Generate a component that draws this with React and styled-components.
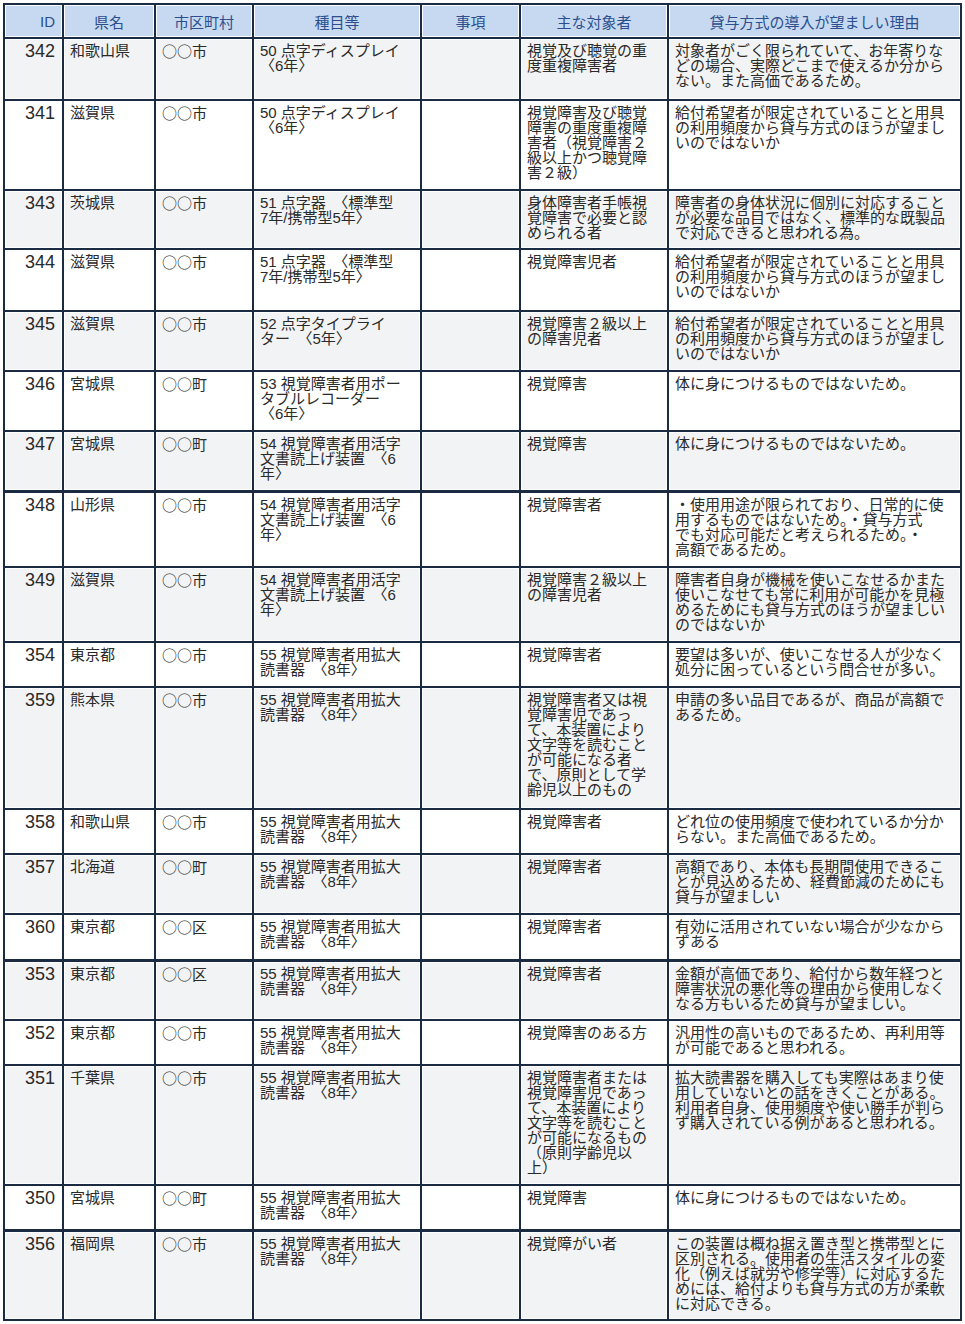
import React from 'react';
import styled, { createGlobalStyle } from 'styled-components';

const GlobalStyle = createGlobalStyle`
  body {
    margin: 0;
    background: #ffffff;
  }
`;

const COLS = '57px 90px 96px 166px 97px 146px 291px';

const Table = styled.div`
  display: flex;
  flex-direction: column;
  gap: 2px;
  width: fit-content;
  margin: 3px 0 0 3px;
  padding: 2px;
  background: #1c2b44;
  font-family: "Liberation Sans", "Noto Sans CJK JP", sans-serif;
`;

const Row = styled.div`
  display: grid;
  grid-template-columns: ${COLS};
  column-gap: 2px;
  height: ${p => p.$h}px;
  margin-top: ${p => (p.$thick ? 1 : 0)}px;
`;

const HeadCell = styled.div`
  display: flex;
  align-items: center;
  justify-content: ${p => (p.$right ? 'flex-end' : 'center')};
  padding: 0 7px;
  background: #c6d9f1;
  box-shadow: inset 0 0 0 1px #ffffff;
  color: #2b4f8e;
  font-size: 15px;
`;

const Cell = styled.div`
  padding: 4px 6px 0;
  background: ${p => (p.$alt ? '#f2f3f4' : '#ffffff')};
  box-shadow: inset 0 0 0 1px #ffffff;
  color: #2a2a2a;
  font-size: 15px;
  line-height: 15px;
  white-space: pre;
  overflow: hidden;
`;

// circles (○) must come from the CJK face, Liberation's is tiny
const CityCell = styled(Cell)`
  font-family: "Noto Sans CJK JP", sans-serif;
`;

const IdCell = styled(Cell)`
  padding-right: 7px;
  text-align: right;
  font-size: 18px;
  line-height: 17px;
`;

const HEADERS = ['県名', '市区町村', '種目等', '事項', '主な対象者', '貸与方式の導入が望ましい理由'];

const ITEM50 = '50 点字ディスプレイ\n〈6年〉';
const ITEM51 = '51 点字器　〈標準型\n7年/携帯型5年〉';
const ITEM54 = '54 視覚障害者用活字\n文書読上げ装置　〈6\n年〉';
const ITEM55 = '55 視覚障害者用拡大\n読書器　〈8年〉';
const KYUFU = '給付希望者が限定されていることと用具\nの利用頻度から貸与方式のほうが望まし\nいのではないか';
const KARADA = '体に身につけるものではないため。';

const rows = [
  { id: 342, h: 60, pref: '和歌山県', city: '○○市', item: ITEM50, target: '視覚及び聴覚の重\n度重複障害者', reason: '対象者がごく限られていて、お年寄りな\nどの場合、実際どこまで使えるか分から\nない。また高価であるため。' },
  { id: 341, h: 88, pref: '滋賀県', city: '○○市', item: ITEM50, target: '視覚障害及び聴覚\n障害の重度重複障\n害者（視覚障害２\n級以上かつ聴覚障\n害２級）', reason: KYUFU },
  { id: 343, h: 57, pref: '茨城県', city: '○○市', item: ITEM51, target: '身体障害者手帳視\n覚障害で必要と認\nめられる者', reason: '障害者の身体状況に個別に対応すること\nが必要な品目ではなく、標準的な既製品\nで対応できると思われる為。' },
  { id: 344, h: 60, pref: '滋賀県', city: '○○市', item: ITEM51, target: '視覚障害児者', reason: KYUFU },
  { id: 345, h: 58, pref: '滋賀県', city: '○○市', item: '52 点字タイプライ\nター　〈5年〉', target: '視覚障害２級以上\nの障害児者', reason: KYUFU },
  { id: 346, h: 58, pref: '宮城県', city: '○○町', item: '53 視覚障害者用ポー\nタブルレコーダー\n〈6年〉', target: '視覚障害', reason: KARADA },
  { id: 347, h: 58, pref: '宮城県', city: '○○町', item: ITEM54, target: '視覚障害', reason: KARADA },
  { id: 348, h: 73, thick: true, pref: '山形県', city: '○○市', item: ITEM54, target: '視覚障害者', reason: '・使用用途が限られており、日常的に使\n用するものではないため。・貸与方式\nでも対応可能だと考えられるため。・\n高額であるため。' },
  { id: 349, h: 73, pref: '滋賀県', city: '○○市', item: ITEM54, target: '視覚障害２級以上\nの障害児者', reason: '障害者自身が機械を使いこなせるかまた\n使いこなせても常に利用が可能かを見極\nめるためにも貸与方式のほうが望ましい\nのではないか' },
  { id: 354, h: 43, pref: '東京都', city: '○○市', item: ITEM55, target: '視覚障害者', reason: '要望は多いが、使いこなせる人が少なく\n処分に困っているという問合せが多い。' },
  { id: 359, h: 120, pref: '熊本県', city: '○○市', item: ITEM55, target: '視覚障害者又は視\n覚障害児であっ\nて、本装置により\n文字等を読むこと\nが可能になる者\nで、原則として学\n齢児以上のもの', reason: '申請の多い品目であるが、商品が高額で\nあるため。' },
  { id: 358, h: 43, pref: '和歌山県', city: '○○市', item: ITEM55, target: '視覚障害者', reason: 'どれ位の使用頻度で使われているか分か\nらない。また高価であるため。' },
  { id: 357, h: 58, pref: '北海道', city: '○○町', item: ITEM55, target: '視覚障害者', reason: '高額であり、本体も長期間使用できるこ\nとが見込めるため、経費節減のためにも\n貸与が望ましい' },
  { id: 360, h: 44, pref: '東京都', city: '○○区', item: ITEM55, target: '視覚障害者', reason: '有効に活用されていない場合が少なから\nずある' },
  { id: 353, h: 57, thick: true, pref: '東京都', city: '○○区', item: ITEM55, target: '視覚障害者', reason: '金額が高価であり、給付から数年経つと\n障害状況の悪化等の理由から使用しなく\nなる方もいるため貸与が望ましい。' },
  { id: 352, h: 43, pref: '東京都', city: '○○市', item: ITEM55, target: '視覚障害のある方', reason: '汎用性の高いものであるため、再利用等\nが可能であると思われる。' },
  { id: 351, h: 118, pref: '千葉県', city: '○○市', item: ITEM55, target: '視覚障害者または\n視覚障害児であっ\nて、本装置により\n文字等を読むこと\nが可能になるもの\n（原則学齢児以\n上）', reason: '拡大読書器を購入しても実際はあまり使\n用していないとの話をきくことがある。\n利用者自身、使用頻度や使い勝手が判ら\nず購入されている例があると思われる。' },
  { id: 350, h: 43, pref: '宮城県', city: '○○町', item: ITEM55, target: '視覚障害', reason: KARADA },
  { id: 356, h: 87, thick: true, pref: '福岡県', city: '○○市', item: ITEM55, target: '視覚障がい者', reason: 'この装置は概ね据え置き型と携帯型とに\n区別される。使用者の生活スタイルの変\n化（例えば就労や修学等）に対応するた\nめには、給付よりも貸与方式の方が柔軟\nに対応できる。' },
];

export default function App() {
  return (
    <>
      <GlobalStyle />
      <Table>
        <Row $h={32}>
          <HeadCell $right>ID</HeadCell>
          {HEADERS.map(h => (
            <HeadCell key={h}>{h}</HeadCell>
          ))}
        </Row>
        {rows.map((r, i) => {
          const alt = i % 2 === 0;
          return (
            <Row key={r.id} $h={r.h} $thick={r.thick}>
              <IdCell $alt={alt}>{r.id}</IdCell>
              <Cell $alt={alt}>{r.pref}</Cell>
              <CityCell $alt={alt}>{r.city}</CityCell>
              <Cell $alt={alt}>{r.item}</Cell>
              <Cell $alt={alt}></Cell>
              <Cell $alt={alt}>{r.target}</Cell>
              <Cell $alt={alt}>{r.reason}</Cell>
            </Row>
          );
        })}
      </Table>
    </>
  );
}
